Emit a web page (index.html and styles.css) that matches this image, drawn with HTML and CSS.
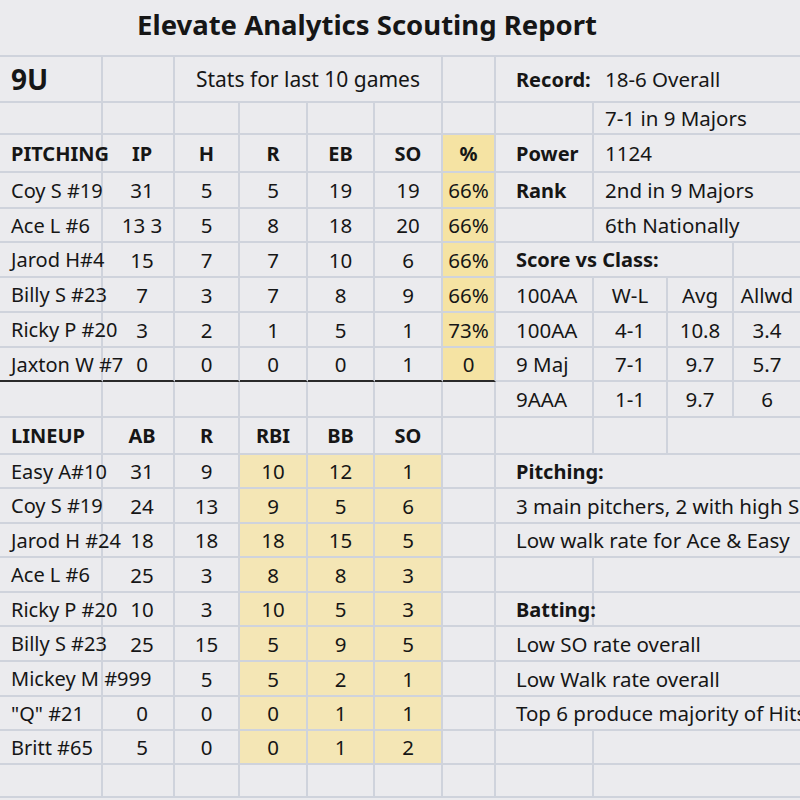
FILE: index.html
```html
<!DOCTYPE html>
<html lang="en">
<head>
<meta charset="utf-8">
<title>Elevate Analytics Scouting Report</title>
<link rel="stylesheet" href="styles.css">
</head>
<body>
<div class="page">
  <div class="title-row"><h1 class="title">Elevate Analytics Scouting Report</h1></div>
  <div class="sheet">
    <!-- row 1 -->
    <div class="c l b big">9U</div>
    <div class="c"></div>
    <div class="c s4 wide">Stats for last 10 games</div>
    <div class="c"></div>
    <div class="c s4 r"><span class="lab b">Record:</span>18-6 Overall</div>
    <!-- row 2 -->
    <div class="c"></div><div class="c"></div><div class="c"></div><div class="c"></div><div class="c"></div><div class="c"></div><div class="c"></div>
    <div class="c"></div>
    <div class="c s3 v">7-1 in 9 Majors</div>
    <!-- row 3 -->
    <div class="c l b">PITCHING</div>
    <div class="c b ip">IP</div>
    <div class="c b">H</div>
    <div class="c b">R</div>
    <div class="c b">EB</div>
    <div class="c b">SO</div>
    <div class="c b y">%</div>
    <div class="c r b">Power</div>
    <div class="c s3 v">1124</div>
    <!-- row 4 -->
    <div class="c l">Coy S #19</div>
    <div class="c ip">31</div>
    <div class="c">5</div>
    <div class="c">5</div>
    <div class="c">19</div>
    <div class="c">19</div>
    <div class="c y">66%</div>
    <div class="c r b">Rank</div>
    <div class="c s3 v">2nd in 9 Majors</div>
    <!-- row 5 -->
    <div class="c l">Ace L #6</div>
    <div class="c ip">13 3</div>
    <div class="c">5</div>
    <div class="c">8</div>
    <div class="c">18</div>
    <div class="c">20</div>
    <div class="c y">66%</div>
    <div class="c"></div>
    <div class="c s3 v">6th Nationally</div>
    <!-- row 6 -->
    <div class="c l">Jarod H#4</div>
    <div class="c ip">15</div>
    <div class="c">7</div>
    <div class="c">7</div>
    <div class="c">10</div>
    <div class="c">6</div>
    <div class="c y">66%</div>
    <div class="c s3 r b">Score vs Class:</div>
    <div class="c"></div>
    <!-- row 7 -->
    <div class="c l">Billy S #23</div>
    <div class="c ip">7</div>
    <div class="c">3</div>
    <div class="c">7</div>
    <div class="c">8</div>
    <div class="c">9</div>
    <div class="c y">66%</div>
    <div class="c r">100AA</div>
    <div class="c">W-L</div>
    <div class="c">Avg</div>
    <div class="c">Allwd</div>
    <!-- row 8 -->
    <div class="c l">Ricky P #20</div>
    <div class="c ip">3</div>
    <div class="c">2</div>
    <div class="c">1</div>
    <div class="c">5</div>
    <div class="c">1</div>
    <div class="c y">73%</div>
    <div class="c r">100AA</div>
    <div class="c">4-1</div>
    <div class="c">10.8</div>
    <div class="c">3.4</div>
    <!-- row 9 -->
    <div class="c l k">Jaxton W #7</div>
    <div class="c ip k">0</div>
    <div class="c k">0</div>
    <div class="c k">0</div>
    <div class="c k">0</div>
    <div class="c k">1</div>
    <div class="c y k">0</div>
    <div class="c r">9 Maj</div>
    <div class="c">7-1</div>
    <div class="c">9.7</div>
    <div class="c">5.7</div>
    <!-- row 10 -->
    <div class="c"></div><div class="c"></div><div class="c"></div><div class="c"></div><div class="c"></div><div class="c"></div><div class="c"></div>
    <div class="c r">9AAA</div>
    <div class="c">1-1</div>
    <div class="c">9.7</div>
    <div class="c">6</div>
    <!-- row 11 -->
    <div class="c l b">LINEUP</div>
    <div class="c b ip">AB</div>
    <div class="c b">R</div>
    <div class="c b">RBI</div>
    <div class="c b">BB</div>
    <div class="c b">SO</div>
    <div class="c"></div>
    <div class="c"></div>
    <div class="c"></div>
    <div class="c s2"></div>
    <!-- row 12 -->
    <div class="c l">Easy A#10</div>
    <div class="c ip">31</div>
    <div class="c">9</div>
    <div class="c y2">10</div>
    <div class="c y2">12</div>
    <div class="c y2">1</div>
    <div class="c"></div>
    <div class="c s4 r b">Pitching:</div>
    <!-- row 13 -->
    <div class="c l">Coy S #19</div>
    <div class="c ip">24</div>
    <div class="c">13</div>
    <div class="c y2">9</div>
    <div class="c y2">5</div>
    <div class="c y2">6</div>
    <div class="c"></div>
    <div class="c s4 r">3 main pitchers, 2 with high SO</div>
    <!-- row 14 -->
    <div class="c l">Jarod H #24</div>
    <div class="c ip">18</div>
    <div class="c">18</div>
    <div class="c y2">18</div>
    <div class="c y2">15</div>
    <div class="c y2">5</div>
    <div class="c"></div>
    <div class="c s4 r">Low walk rate for Ace &amp; Easy</div>
    <!-- row 15 -->
    <div class="c l">Ace L #6</div>
    <div class="c ip">25</div>
    <div class="c">3</div>
    <div class="c y2">8</div>
    <div class="c y2">8</div>
    <div class="c y2">3</div>
    <div class="c"></div>
    <div class="c"></div>
    <div class="c s3"></div>
    <!-- row 16 -->
    <div class="c l">Ricky P #20</div>
    <div class="c ip">10</div>
    <div class="c">3</div>
    <div class="c y2">10</div>
    <div class="c y2">5</div>
    <div class="c y2">3</div>
    <div class="c"></div>
    <div class="c r b">Batting:</div>
    <div class="c s3"></div>
    <!-- row 17 -->
    <div class="c l">Billy S #23</div>
    <div class="c ip">25</div>
    <div class="c">15</div>
    <div class="c y2">5</div>
    <div class="c y2">9</div>
    <div class="c y2">5</div>
    <div class="c"></div>
    <div class="c s4 r">Low SO rate overall</div>
    <!-- row 18 -->
    <div class="c l">Mickey M #999</div>
    <div class="c ip"></div>
    <div class="c">5</div>
    <div class="c y2">5</div>
    <div class="c y2">2</div>
    <div class="c y2">1</div>
    <div class="c"></div>
    <div class="c s4 r">Low Walk rate overall</div>
    <!-- row 19 -->
    <div class="c l">"Q" #21</div>
    <div class="c ip">0</div>
    <div class="c">0</div>
    <div class="c y2">0</div>
    <div class="c y2">1</div>
    <div class="c y2">1</div>
    <div class="c"></div>
    <div class="c s4 r">Top 6 produce majority of Hits</div>
    <!-- row 20 -->
    <div class="c l">Britt #65</div>
    <div class="c ip">5</div>
    <div class="c">0</div>
    <div class="c y2">0</div>
    <div class="c y2">1</div>
    <div class="c y2">2</div>
    <div class="c"></div>
    <div class="c"></div>
    <div class="c s3"></div>
    <!-- row 21 -->
    <div class="c"></div><div class="c"></div><div class="c"></div><div class="c"></div><div class="c"></div><div class="c"></div><div class="c"></div>
    <div class="c"></div>
    <div class="c s3"></div>
  </div>
</div>
</body>
</html>
```
FILE: styles.css
```css
html, body {
  margin: 0;
  padding: 0;
  background: #ebebee;
}
body {
  font-family: "Noto Sans", "DejaVu Sans", sans-serif;
  color: #161616;
}
.page {
  width: 800px;
  height: 800px;
  overflow: hidden;
}
.title-row {
  height: 57px;
  width: 800px;
  box-sizing: border-box;
  padding-right: 66px;
  border-bottom: 2px solid #cfd3dc;
  display: flex;
  align-items: center;
  justify-content: center;
}
.title {
  margin: 0;
  font-size: 27.5px;
  font-weight: 700;
  padding-bottom: 7px;
}
.sheet {
  width: 802px;
  display: grid;
  grid-template-columns: 103px 72px 65px 68px 67px 68px 53px 98px 74px 66px 68px;
  grid-template-rows: 46px 32px 38px 36px 34px 35px 35px 35px 34px 36px 37px 34px 35px 34px 35px 34px 35px 35px 34px 34px 33px;
}
.c {
  box-sizing: border-box;
  border-right: 2px solid #cfd3dc;
  border-bottom: 2px solid #cfd3dc;
  display: flex;
  align-items: center;
  justify-content: center;
  white-space: nowrap;
  font-size: 20.5px;
  min-width: 0;
}
.s2 { grid-column: span 2; }
.s3 { grid-column: span 3; }
.s4 { grid-column: span 4; }
.l {
  justify-content: flex-start;
  padding-left: 11px;
  font-size: 20px;
}
.r {
  justify-content: flex-start;
  padding-left: 20px;
}
.v {
  justify-content: flex-start;
  padding-left: 11px;
}
.ip {
  padding-left: 8px;
}
.wide {
  font-size: 21px;
}
.b {
  font-weight: 700;
  font-size: 20px;
}
.big {
  font-size: 28px;
}
.lab {
  display: inline-block;
  width: 89px;
}
.y {
  background: #f5e3a3;
}
.y2 {
  background: #f4e6b5;
}
.k {
  border-bottom-color: #2a2a2a;
}
```
